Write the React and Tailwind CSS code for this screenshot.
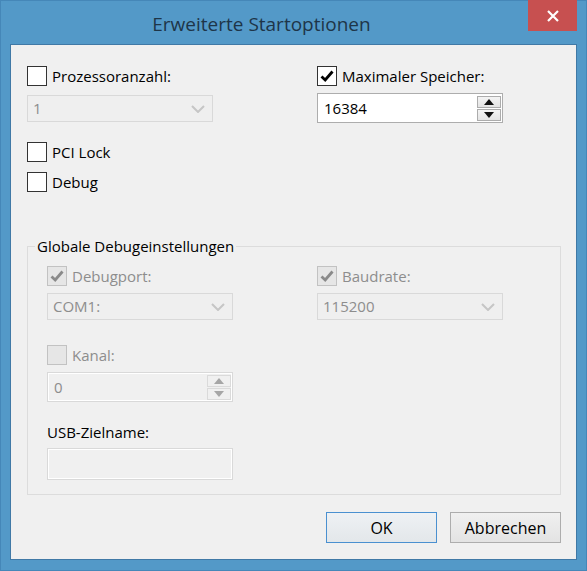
import React from 'react';

const font = { fontFamily: '"Open Sans", "Noto Sans", sans-serif' };

function CheckMark({ className }) {
  return (
    <svg viewBox="0 0 16 16" className={className}>
      <path d="M2.5 8.5 L6.2 12 L13.5 3.5" fill="none" stroke="currentColor" strokeWidth="2.8" />
    </svg>
  );
}

function Checkbox({ checked, disabled, label }) {
  return (
    <div className="flex items-center h-[20px] gap-[5px]">
      <span
        className={`w-[20px] h-[20px] border flex items-center justify-center shrink-0 ${
          disabled ? 'border-[#c2c2c2] bg-[#e6e6e6] text-[#8a8a8a]' : 'border-[#333333] bg-white text-black'
        }`}
      >
        {checked && <CheckMark className="w-[16px] h-[16px]" />}
      </span>
      <span className={`leading-[20px] ${disabled ? 'text-[#8d8d8d]' : 'text-black'}`}>{label}</span>
    </div>
  );
}

function Chevron() {
  return (
    <svg viewBox="0 0 14 8" className="w-[14px] h-[8px]">
      <path d="M1 1 L7 7 L13 1" fill="none" stroke="#c6c6c6" strokeWidth="2" />
    </svg>
  );
}

function DisabledSelect({ value }) {
  return (
    <div className="w-[186px] h-[27px] border border-[#d9d9d9] bg-[#efefef] flex items-center justify-between pl-[5px] pr-[7px]">
      <span className="text-[#8d8d8d]">{value}</span>
      <Chevron />
    </div>
  );
}

function Arrow({ up, color }) {
  return (
    <svg viewBox="0 0 10 6" className="w-[10px] h-[6px]">
      <path d={up ? 'M0 6 L5 0 L10 6 Z' : 'M0 0 L5 6 L10 0 Z'} fill={color} />
    </svg>
  );
}

function Spinner({ value, disabled }) {
  const btn = disabled
    ? 'border-[#dadada] bg-[#f0f0f0]'
    : 'border-[#acacac] bg-gradient-to-b from-[#f4f4f4] to-[#e4e4e4]';
  const arrow = disabled ? '#a6a6a6' : '#111111';
  return (
    <div
      className={`w-[186px] h-[30px] border flex items-stretch ${
        disabled
          ? 'border-[#d9d9d9] bg-[#f0f0f0] shadow-[inset_0_0_0_1px_#ffffff]'
          : 'border-[#adadad] bg-white'
      }`}
    >
      <span className={`flex-1 flex items-center pl-[6px] ${disabled ? 'text-[#8d8d8d]' : 'text-black'}`}>
        {value}
      </span>
      <div className="w-[24px] flex flex-col gap-[1px] pt-[2px] pb-[1px] mr-[1px]">
        <div className={`flex-1 border flex items-center justify-center ${btn}`}>
          <Arrow up color={arrow} />
        </div>
        <div className={`flex-1 border flex items-center justify-center ${btn}`}>
          <Arrow color={arrow} />
        </div>
      </div>
    </div>
  );
}

export default function App() {
  return (
    <div
      className="w-[587px] h-[571px] bg-[#5399c8] border border-[#4587b8] flex flex-col text-[15px]"
      style={font}
    >
      {/* title bar */}
      <div className="relative h-[43px] flex items-center justify-center shrink-0 pr-[64px]">
        <span className="text-[19px] text-[#1e3548] mt-[3px]">Erweiterte Startoptionen</span>
        <div className="absolute right-[9px] top-[-1px] w-[49px] h-[31px] bg-[#c75050] flex items-center justify-center">
          <svg viewBox="0 0 12 12" className="w-[12px] h-[12px]">
            <path d="M1 1 L11 11 M11 1 L1 11" stroke="#ffffff" strokeWidth="2.2" />
          </svg>
        </div>
      </div>

      {/* client area */}
      <div className="mx-[9px] h-[516px] bg-[#f0f0f0] border border-[#4079a6] flex flex-col pl-[16px] pr-[15px]">
        <div className="grid grid-cols-[186px_186px] gap-x-[104px] pt-[21px]">
          <div className="flex flex-col">
            <Checkbox label="Prozessoranzahl:" />
            <div className="mt-[9px]">
              <DisabledSelect value="1" />
            </div>
            <div className="mt-[20px]">
              <Checkbox label="PCI Lock" />
            </div>
            <div className="mt-[10px]">
              <Checkbox label="Debug" />
            </div>
          </div>
          <div className="flex flex-col">
            <Checkbox checked label="Maximaler Speicher:" />
            <div className="mt-[7px]">
              <Spinner value="16384" />
            </div>
          </div>
        </div>

        <fieldset className="mt-[44px] border border-[#dcdcdc] pb-[14px]">
          <legend className="ml-[7px] px-[2px] leading-[20px] text-black">Globale Debugeinstellungen</legend>
          <div className="grid grid-cols-[186px_186px] gap-x-[84px] pt-[10px] pl-[19px]">
            <div className="flex flex-col">
              <Checkbox checked disabled label="Debugport:" />
              <div className="mt-[7px]">
                <DisabledSelect value="COM1:" />
              </div>
              <div className="mt-[25px]">
                <Checkbox disabled label="Kanal:" />
              </div>
              <div className="mt-[7px]">
                <Spinner disabled value="0" />
              </div>
              <div className="mt-[20px] leading-[20px] text-black">USB-Zielname:</div>
              <div className="mt-[6px] w-[186px] h-[32px] border border-[#d9d9d9] bg-[#f0f0f0] shadow-[inset_0_0_0_1px_#ffffff]" />
            </div>
            <div className="flex flex-col">
              <Checkbox checked disabled label="Baudrate:" />
              <div className="mt-[7px]">
                <DisabledSelect value="115200" />
              </div>
            </div>
          </div>
        </fieldset>

        <div className="mt-[17px] flex justify-end gap-[13px]">
          <button className="w-[111px] h-[31px] border border-[#4a90d0] bg-gradient-to-b from-[#eef1f4] to-[#e3e7ea] text-[16px] text-black">
            OK
          </button>
          <button className="w-[111px] h-[31px] border border-[#adadad] bg-gradient-to-b from-[#f0f0f0] to-[#e3e3e3] text-[16px] text-black">
            Abbrechen
          </button>
        </div>
      </div>
    </div>
  );
}
